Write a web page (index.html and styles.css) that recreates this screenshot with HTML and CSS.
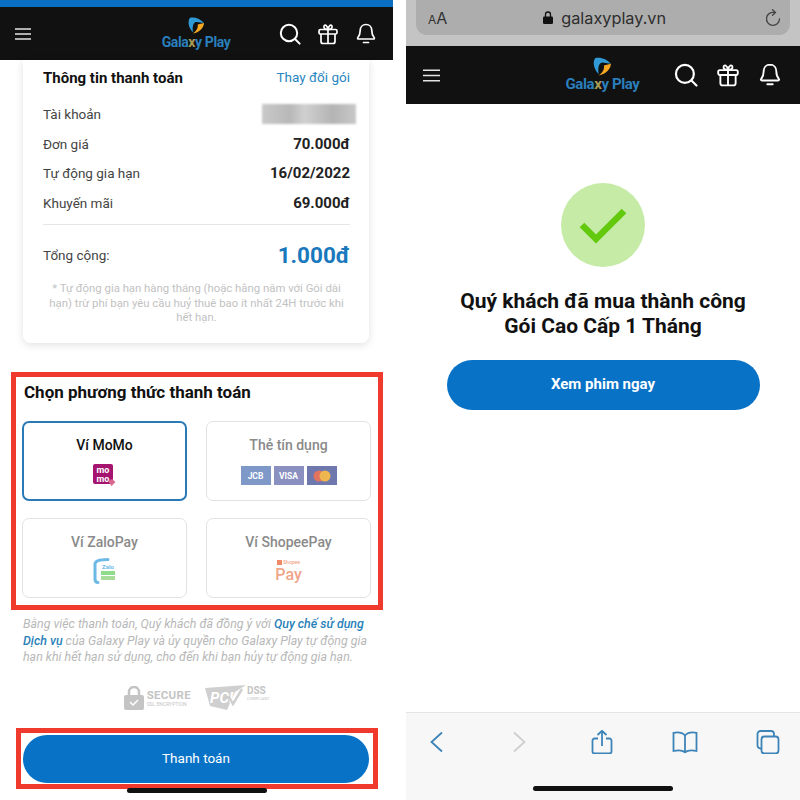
FILE: index.html
```html
<!DOCTYPE html>
<html lang="vi">
  <head>
    <meta charset="UTF-8" />
    <meta name="viewport" content="width=device-width, initial-scale=1.0" />
    <title>Galaxy Play - Thanh toán</title>
    <link rel="stylesheet" href="styles.css">
  </head>
  <body>
    <svg class="sprites" width="0" height="0">
      <symbol id="i-menu" viewBox="0 0 16 12">
        <path d="M0 1h16M0 6h16M0 11h16" fill="none" stroke="currentColor" stroke-width="1.5" />
      </symbol>
      <symbol id="i-search" viewBox="0 0 22 22">
        <circle cx="10" cy="10" r="8.2" fill="none" stroke="currentColor" stroke-width="2" />
        <path d="M16 16l4.6 4.6" fill="none" stroke="currentColor" stroke-width="2" stroke-linecap="round" />
      </symbol>
      <symbol id="i-gift" viewBox="0 0 22 22">
        <g fill="none" stroke="currentColor" stroke-width="1.7" stroke-linejoin="round">
          <rect x="2" y="6.5" width="18" height="4.5" rx="1.5" />
          <path d="M4 11v7.5a2 2 0 0 0 2 2h10a2 2 0 0 0 2-2V11M11 6.5v14" />
          <path d="M11 6.5C8 6.5 6.5 5 7 3.2 7.6 1.4 10 1.6 11 6.5zM11 6.5c3 0 4.500-1.500 4-3.300C14.400 1.400 12 1.600 11 6.500z" />
        </g>
      </symbol>
      <symbol id="i-bell" viewBox="0 0 22 22">
        <path d="M11 1.500c-3.500 0-5.800 2.600-5.800 6 0 3.300-.5 5-2.300 7-.6.700-.2 1.500.7 1.500h14.800c.9 0 1.300-.8.7-1.500-1.800-2-2.300-3.700-2.300-7 0-3.400-2.300-6-5.800-6z" fill="none" stroke="currentColor" stroke-width="1.700" />
        <path d="M8.500 19.500h5" fill="none" stroke="currentColor" stroke-width="1.700" stroke-linecap="round" />
      </symbol>
      <symbol id="i-galaxy" viewBox="0 0 18 17">
        <path d="M3 .8C8 -.2 13.500 1.800 17 6L9.500 5C6.500 5 5 9 6 15.500 2 11.500 0 5 3 .8z" fill="#2f9ad6" />
        <path d="M17 6c0 5-5 9.500-11 10.500 4-3 5.300-6 4.700-9z" fill="#f5a623" />
      </symbol>
    </svg>

    <main class="shots">
      <section class="phone phone-pay">
        <div class="top-strip"></div>
        <header class="site-header">
          <svg class="menu-icon"><use href="#i-menu" /></svg>
          <div class="brand">
            <svg class="brand-icon"><use href="#i-galaxy" /></svg>
            <span class="brand-name">Gala<i>x</i>y Play</span>
          </div>
          <div class="header-icons">
            <svg><use href="#i-search" /></svg>
            <svg><use href="#i-gift" /></svg>
            <svg><use href="#i-bell" /></svg>
          </div>
        </header>

        <div class="bill-card">
          <div class="bill-head">
            <h2>Thông tin thanh toán</h2>
            <a href="#">Thay đổi gói</a>
          </div>
          <div class="bill-row"><span>Tài khoản</span><div class="masked"></div></div>
          <div class="bill-row"><span>Đơn giá</span><b>70.000đ</b></div>
          <div class="bill-row"><span>Tự động gia hạn</span><b>16/02/2022</b></div>
          <div class="bill-row"><span>Khuyến mãi</span><b>69.000đ</b></div>
          <div class="bill-total"><span>Tổng cộng:</span><b>1.000đ</b></div>
          <p class="bill-note">
            * Tự động gia hạn hàng tháng (hoặc hằng năm với Gói dài<br />
            hạn) trừ phí bạn yêu cầu huỷ thuê bao ít nhất 24H trước khi<br />
            hết hạn.
          </p>
        </div>

        <div class="methods red-box">
          <h2>Chọn phương thức thanh toán</h2>
          <div class="method-grid">
            <div class="method active">
              <span>Ví MoMo</span>
              <svg class="logo-momo" width="23" height="23" viewBox="0 0 23 23">
                <rect width="20" height="20" rx="2" fill="#a5156f" />
                <text x="10" y="9" class="momo-text">mo</text>
                <text x="10" y="17.500" class="momo-text">mo</text>
                <path d="M15 17l4-2 3.500 3-4 4z" fill="#d9688f" />
              </svg>
            </div>
            <div class="method">
              <span>Thẻ tín dụng</span>
              <div class="cards">
                <div class="card-logo jcb">JCB</div>
                <div class="card-logo visa">VISA</div>
                <div class="card-logo master">
                  <svg width="20" height="12" viewBox="0 0 20 12">
                    <circle cx="7" cy="6" r="5.500" fill="#e2735f" />
                    <circle cx="13" cy="6" r="5.500" fill="#efb64f" />
                  </svg>
                </div>
              </div>
            </div>
            <div class="method">
              <span>Ví ZaloPay</span>
              <svg class="logo-zalo" width="24" height="26" viewBox="0 0 24 26">
                <path d="M15 1.500C6 1.500 2 3 2 6v15c0 2 1 3.500 3 3.500" fill="none" stroke="#6db9e6" stroke-width="3" stroke-linecap="round" />
                <text x="15" y="11" class="zalo-text">Zalo</text>
                <rect x="8" y="13" width="14" height="4" fill="#8fdc8a" />
                <rect x="8" y="18" width="14" height="4" fill="#a8dc9a" />
              </svg>
            </div>
            <div class="method">
              <span>Ví ShopeePay</span>
              <div class="logo-shopee">
                <small>Shopee</small>
                <strong>Pay</strong>
              </div>
            </div>
          </div>
        </div>

        <p class="terms">
          Bằng việc thanh toán, Quý khách đã đồng ý với <a href="#">Quy chế sử dụng<br />
          Dịch vụ</a> của Galaxy Play và ủy quyền cho Galaxy Play tự động gia<br />
          hạn khi hết hạn sử dụng, cho đến khi bạn hủy tự động gia hạn.
        </p>

        <div class="trust">
          <div class="secure">
            <svg width="20" height="24" viewBox="0 0 20 24">
              <path d="M5 10V6a5 5 0 0 1 10 0v4" fill="none" stroke="#c4c4c4" stroke-width="2.500" />
              <rect y="9" width="20" height="15" rx="2" fill="#c4c4c4" />
              <path d="M6 16l3 3 5-5" fill="none" stroke="#fff" stroke-width="1.500" />
            </svg>
            <div class="secure-text"><b>SECURE</b><small>SSL ENCRYPTION</small></div>
          </div>
          <div class="pci">
            <svg width="42" height="26" viewBox="0 0 42 26">
              <path d="M0 3L41 0 30 7 22 25 5 21z" fill="#cfcfcf" />
              <text x="5" y="18" class="pci-text">PCI</text>
              <path d="M24 12l4 7 9-15" fill="none" stroke="#cfcfcf" stroke-width="2.500" />
            </svg>
            <div class="pci-dss"><strong>DSS</strong><small>COMPLIANT</small></div>
          </div>
        </div>

        <div class="pay-box red-box">
          <button class="pill-btn">Thanh toán</button>
        </div>
        <div class="pay-home"></div>
      </section>

      <section class="phone phone-done">
        <div class="address-bar">
          <div class="address-pill">
            <span class="text-size"><small>A</small>A</span>
            <span class="url">
              <svg width="10" height="13" viewBox="0 0 10 13">
                <path d="M2.500 6V3.500a2.500 2.500 0 0 1 5 0V6" fill="none" stroke="#111" stroke-width="1.300" />
                <rect y="5.500" width="10" height="7.500" rx="1.200" fill="#111" />
              </svg>
              galaxyplay.vn
            </span>
            <svg class="reload" width="16" height="18" viewBox="0 0 16 18">
              <path d="M9.500 3.500A6.500 6.500 0 1 0 14.500 10" fill="none" stroke="#444" stroke-width="1.300" stroke-linecap="round" />
              <path d="M7.500 .8l3 2.700-3 2.700" fill="none" stroke="#444" stroke-width="1.300" stroke-linecap="round" />
            </svg>
          </div>
        </div>
        <header class="site-header">
          <svg class="menu-icon"><use href="#i-menu" /></svg>
          <div class="brand">
            <svg class="brand-icon"><use href="#i-galaxy" /></svg>
            <span class="brand-name">Gala<i>x</i>y Play</span>
          </div>
          <div class="header-icons">
            <svg><use href="#i-search" /></svg>
            <svg><use href="#i-gift" /></svg>
            <svg><use href="#i-bell" /></svg>
          </div>
        </header>

        <div class="success">
          <div class="success-mark">
            <svg width="50" height="38" viewBox="0 0 50 38">
              <path d="M4 19l14 14L46 5" fill="none" stroke="#63c90c" stroke-width="6.500" />
            </svg>
          </div>
          <h1>Quý khách đã mua thành công<br />Gói Cao Cấp 1 Tháng</h1>
          <button class="pill-btn watch-btn">Xem phim ngay</button>
        </div>

        <footer class="safari-bar">
          <div class="safari-icons">
            <svg viewBox="0 0 26 24"><path d="M19 2.500L8.500 12 19 21.500" /></svg>
            <svg class="off" viewBox="0 0 26 24"><path d="M8 2.500L18.500 12 8 21.500" /></svg>
            <svg viewBox="0 0 26 24">
              <path d="M9 8.500H5.500a2 2 0 0 0-2 2v11a2 2 0 0 0 2 2h15a2 2 0 0 0 2-2v-11a2 2 0 0 0-2-2H17M13 16V1M8.500 5L13 .8 17.500 5" />
            </svg>
            <svg viewBox="0 0 26 24">
              <path d="M13 5.500C10.500 2.500 6 2 1.500 2.800V21c4-1 9-.8 11.500 1.200 2.500-2 7.500-2.200 11.500-1.200V2.800C20 2 15.500 2.500 13 5.500zM13 5.500v16.500" />
            </svg>
            <svg viewBox="0 0 26 24">
              <rect x="6.500" y="6.500" width="17" height="17" rx="3" />
              <path d="M6.500 18.500h-1a3 3 0 0 1-3-3V4a3 3 0 0 1 3-3H16a3 3 0 0 1 3 3v2.500" />
            </svg>
          </div>
          <div class="home-bar"></div>
        </footer>
      </section>
    </main>
  </body>
</html>
```

FILE: styles.css
```css
* {
  margin: 0;
  padding: 0;
  box-sizing: border-box;
  font-family: "Roboto", "Liberation Sans", sans-serif;
}

body {
  background: white;
  width: 800px;
  height: 800px;
  overflow: hidden;
}

.sprites {
  display: block;
  height: 0;
}

.shots {
  display: flex;
  gap: 13px;
  height: 800px;
}

.phone {
  position: relative;
  height: 800px;
  overflow: hidden;
}

.phone-pay {
  width: 393px;
}

.phone-done {
  width: 394px;
  display: flex;
  flex-direction: column;
}

/* header shared by both shots */
.site-header {
  background: #111111;
  color: white;
  display: grid;
  grid-template-columns: 1fr auto 1fr;
  align-items: center;
  height: 53px;
  padding: 0 16px 0 15px;
}

.menu-icon {
  width: 16px;
  height: 12px;
  color: #e4e4e4;
}

.brand {
  display: flex;
  flex-direction: column;
  align-items: center;
}

.brand-icon {
  width: 18px;
  height: 17px;
}

.brand-name {
  color: #2a7fbc;
  font-size: 14px;
  font-weight: 700;
  line-height: 16px;
  letter-spacing: -0.4px;
  white-space: nowrap;
}

.brand-name i {
  color: #a79a55;
  font-style: normal;
}

.header-icons {
  display: flex;
  justify-content: flex-end;
  gap: 16px;
}

.header-icons svg {
  width: 22px;
  height: 22px;
}

.phone-done .site-header {
  height: 58px;
  padding: 0 18px 0 17px;
}

.phone-done .header-icons {
  gap: 18px;
}

.phone-done .header-icons svg {
  width: 24px;
  height: 24px;
}

.phone-done .menu-icon {
  width: 17px;
  height: 13px;
}

.phone-done .brand-icon {
  width: 20px;
  height: 19px;
}

.phone-done .brand-name {
  font-size: 15px;
  line-height: 17px;
}

/* left shot */
.top-strip {
  background: #0a6fc2;
  height: 7px;
}

.bill-card {
  width: 346px;
  height: 283px;
  margin-left: 23px;
  padding: 7px 19px 0 20px;
  border-radius: 0 0 8px 8px;
  box-shadow: 0 2px 8px rgba(0, 0, 0, 0.12);
}

.bill-head {
  display: flex;
  justify-content: space-between;
  align-items: center;
  height: 20px;
  margin-bottom: 12.5px;
}

.bill-head h2 {
  color: #111;
  font-size: 15px;
  font-weight: 700;
  padding-top: 1px;
}

.bill-head a {
  color: #2a86c0;
  font-size: 13.5px;
  text-decoration: none;
}

.bill-row {
  display: flex;
  justify-content: space-between;
  align-items: center;
  height: 29.6px;
  color: #444;
  font-size: 13.5px;
}

.bill-row b {
  color: #222;
  font-size: 15px;
}

.masked {
  width: 94px;
  height: 20px;
  margin-right: -6px;
  background: linear-gradient(90deg, #c9c9c9, #b8b8b8 30%, #d0d0d0 45%, #b4b4b4 75%, #c8c8c8);
  filter: blur(1px);
}

.bill-total {
  display: flex;
  justify-content: space-between;
  align-items: center;
  height: 50px;
  margin-top: 6px;
  border-top: 1px solid #e6e6e6;
  padding-top: 11px;
  color: #444;
  font-size: 13.5px;
}

.bill-total b {
  color: #1a78bd;
  font-size: 22.5px;
}

.bill-note {
  margin-top: 7.5px;
  color: #c2c2c2;
  font-size: 11.35px;
  line-height: 14.5px;
  text-align: center;
  white-space: nowrap;
}

.red-box {
  border: 5px solid #f03a2e;
}

.methods {
  width: 372px;
  height: 238px;
  margin: 29px 0 0 11px;
  padding: 3px 6px 0;
}

.methods h2 {
  color: #111;
  font-size: 17px;
  font-weight: 700;
  line-height: 24px;
  margin-left: 2px;
}

.method-grid {
  display: grid;
  grid-template-columns: 165px 165px;
  grid-auto-rows: 80px;
  gap: 17px 19px;
  margin-top: 17px;
}

.method {
  border: 1.5px solid #e2e2e2;
  border-radius: 7px;
  display: flex;
  flex-direction: column;
  align-items: center;
  padding-top: 14px;
  gap: 9px;
  color: #8a8a8a;
  font-size: 14px;
  font-weight: 500;
}

.method > span {
  line-height: 18px;
}

.method.active {
  border: 2px solid #2a7ab8;
  color: #111;
  padding-top: 12.5px;
  gap: 10px;
}

.momo-text {
  fill: white;
  font-size: 9px;
  font-weight: 700;
  text-anchor: middle;
}

.zalo-text {
  fill: #6db9e6;
  font-size: 6px;
  font-weight: 700;
  text-anchor: middle;
}

.pci-text {
  fill: white;
  font-size: 15px;
  font-style: italic;
  font-weight: 700;
}

.cards {
  display: flex;
  gap: 3px;
  margin-top: 3px;
}

.card-logo {
  width: 30px;
  height: 19px;
  display: flex;
  align-items: center;
  justify-content: center;
  color: white;
  font-size: 8.5px;
  font-weight: 700;
}

.jcb {
  background: #7e98c8;
}

.visa {
  background: #8a90c0;
}

.master {
  background: #6f78ad;
}

.logo-zalo {
  margin-top: -2px;
}

.logo-shopee {
  display: flex;
  flex-direction: column;
  align-items: center;
  color: #f0a58a;
  margin-top: -1px;
}

.logo-shopee small {
  display: flex;
  align-items: center;
  gap: 1px;
  font-size: 5px;
  line-height: 6px;
}

.logo-shopee small::before {
  content: "";
  width: 5px;
  height: 5px;
  background: #ee8a68;
}

.logo-shopee strong {
  font-size: 16px;
  font-weight: 500;
  line-height: 19px;
}

.terms {
  margin: 6px 0 0 23px;
  color: #b8b8b8;
  font-size: 12.4px;
  font-style: italic;
  line-height: 16.5px;
  white-space: nowrap;
}

.terms a {
  color: #2a7fb8;
  font-weight: 500;
  text-decoration: none;
}

.trust {
  display: flex;
  justify-content: center;
  align-items: center;
  gap: 14px;
  height: 26px;
  margin-top: 19px;
  color: #c4c4c4;
}

.secure {
  display: flex;
  align-items: center;
  gap: 3px;
}

.secure-text {
  display: flex;
  flex-direction: column;
}

.secure-text b {
  font-size: 11.5px;
  line-height: 12px;
  letter-spacing: 0.3px;
}

.secure-text small {
  font-size: 5px;
  line-height: 6px;
}

.pci {
  display: flex;
  align-items: flex-start;
  gap: 0;
}

.pci-dss {
  display: flex;
  flex-direction: column;
}

.pci-dss strong {
  font-size: 10px;
  line-height: 11px;
}

.pci-dss small {
  font-size: 4px;
  line-height: 5px;
}

.pay-box {
  width: 362px;
  height: 61px;
  margin: 17.5px 0 0 16px;
  padding: 2px 4px 0 2px;
}

.pill-btn {
  display: block;
  width: 100%;
  height: 48px;
  padding-bottom: 2px;
  border: none;
  border-radius: 24px;
  background: #0872c6;
  color: white;
  font-size: 13.5px;
  cursor: pointer;
}

.pay-home {
  position: absolute;
  left: 127px;
  top: 788px;
  width: 140px;
  height: 5px;
  background: #111;
  border-radius: 3px;
}

/* right shot */
.address-bar {
  height: 46px;
  padding: 0 10px 0 10px;
  background: #c4c4c4;
}

.address-pill {
  display: flex;
  align-items: center;
  justify-content: space-between;
  height: 35px;
  padding: 0 9px 0 12px;
  background: #adadad;
  border-radius: 0 0 11px 11px;
}

.text-size {
  color: #333;
  font-family: "Inter", sans-serif;
  font-size: 16px;
}

.text-size small {
  font-family: inherit;
  font-size: 12px;
}

.url {
  display: flex;
  align-items: center;
  gap: 8px;
  margin-left: -3px;
  color: #2e2e2e;
  font-family: "Inter", sans-serif;
  font-size: 16.3px;
}

.success {
  display: flex;
  flex-direction: column;
  align-items: center;
  padding-top: 79px;
}

.success-mark {
  width: 84px;
  height: 84px;
  border-radius: 50%;
  background: #c5eba6;
  display: flex;
  align-items: center;
  justify-content: center;
}

.success h1 {
  margin-top: 22px;
  color: #111;
  font-size: 21px;
  font-weight: 700;
  line-height: 25px;
  text-align: center;
}

.watch-btn {
  width: 313px;
  height: 50px;
  margin-top: 21px;
  border-radius: 25px;
  font-size: 15px;
  font-weight: 700;
}

.safari-bar {
  margin-top: auto;
  height: 88px;
  padding-top: 17px;
  background: #f7f7f7;
  border-top: 1px solid #e5e5e5;
}

.safari-icons {
  display: flex;
  justify-content: space-between;
  padding: 0 19px 0 17px;
}

.safari-icons svg {
  width: 26px;
  height: 24px;
  fill: none;
  stroke: #3c84b8;
  stroke-width: 1.8;
}

.safari-icons svg.off {
  stroke: #cfcfcf;
}

.home-bar {
  width: 140px;
  height: 5px;
  margin: 32px auto 0;
  background: #111;
  border-radius: 3px;
}
```
